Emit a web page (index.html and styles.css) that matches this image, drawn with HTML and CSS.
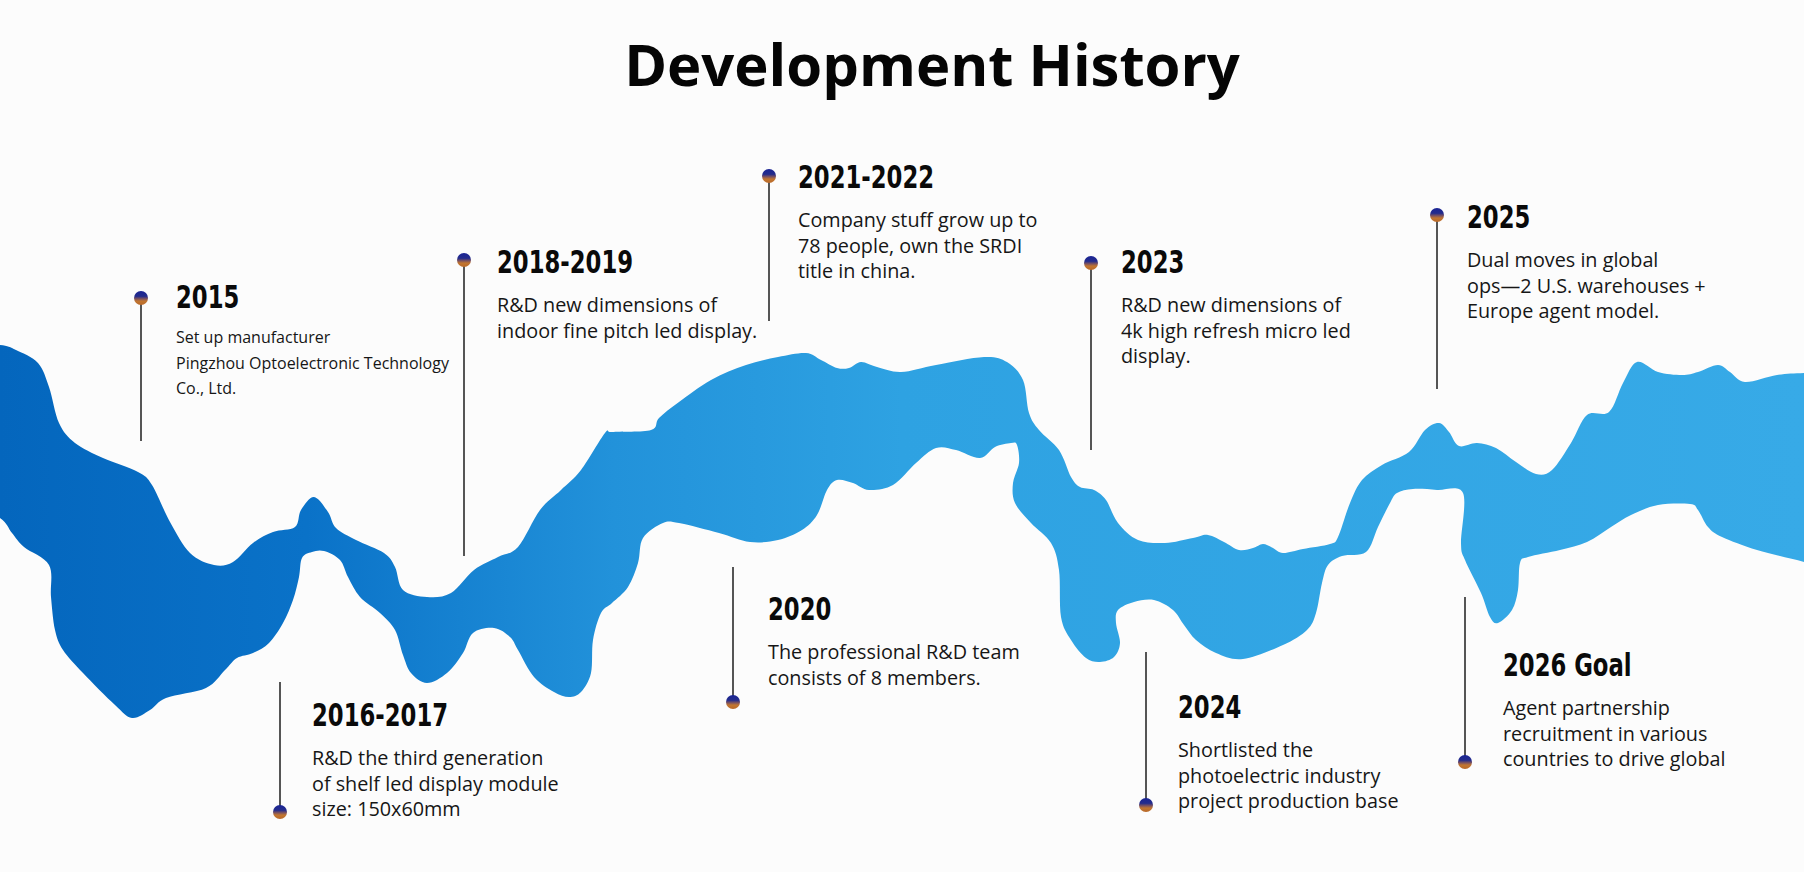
FILE: index.html
```html
<!DOCTYPE html>
<html lang="en">
<head>
<meta charset="utf-8">
<title>Development History</title>
<link rel="stylesheet" href="styles.css">
<script src="script.js" defer></script>
</head>
<body>
<main class="page">
  <h1 class="title">Development History</h1>
  <section class="timeline">
    <svg class="wave" viewBox="0 100 1804 772" width="1804" height="772" aria-hidden="true">
      <defs>
        <linearGradient id="waveGrad" gradientUnits="userSpaceOnUse" x1="0" y1="0" x2="1804" y2="0">
          <stop offset="0" stop-color="#0466bd"/>
          <stop offset="0.17" stop-color="#0a72c8"/>
          <stop offset="0.34" stop-color="#2292da"/>
          <stop offset="0.5" stop-color="#2ea2e2"/>
          <stop offset="1" stop-color="#37aae7"/>
        </linearGradient>
      </defs>
      <path class="ribbon" fill="url(#waveGrad)" d="M-70,345 L-35,345 L0,345 L16,350 L38,363 L49,387 L59,423 L75,443 L103,458 L138,472 L152,485 L170,522 L190,553 L214,565 L233,562 L253,543 L273,532 L295,527 L301,510 L314,497 L328,512 L336,528 L356,540 L384,553 L395,567 L403,590 L427,597 L451,593 L474,570 L498,557 L518,547 L540,510 L561,490 L581,470 L605,433 L612,432 L651,430 L659,418 L679,402 L711,380 L746,365 L778,357 L806,353 L821,360 L837,368 L849,368 L861,362 L877,367 L901,372 L936,365 L984,357 L1007,362 L1023,380 L1029,413 L1039,430 L1059,450 L1071,477 L1080,487 L1094,490 L1106,500 L1118,523 L1138,540 L1165,543 L1193,538 L1208,535 L1224,542 L1239,550 L1253,548 L1263,544 L1273,548 L1283,553 L1303,549 L1330,544 L1338,537 L1350,503 L1362,480 L1382,465 L1409,452 L1425,430 L1439,423 L1449,432 L1459,446 L1477,443 L1496,448 L1516,462 L1536,474 L1552,470 L1571,443 L1587,415 L1609,412 L1623,383 L1637,362 L1658,372 L1682,375 L1698,372 L1718,365 L1730,372 L1745,382 L1777,375 L1804,373 L1840,372 L1875,372 L1875,575 L1840,572 L1804,562 L1757,550 L1722,537 L1708,527 L1698,510 L1690,504 L1658,505 L1631,515 L1611,527 L1587,542 L1560,550 L1528,557 L1520,563 L1518,590 L1512,610 L1498,623 L1490,617 L1481,593 L1465,560 L1461,543 L1463,493 L1437,490 L1413,489 L1397,493 L1390,503 L1378,527 L1366,552 L1342,556 L1328,565 L1322,583 L1316,613 L1307,630 L1283,645 L1243,659 L1216,653 L1196,640 L1184,625 L1173,610 L1154,600 L1134,602 L1118,610 L1116,623 L1120,643 L1114,657 L1100,662 L1086,658 L1071,640 L1061,617 L1059,570 L1051,543 L1031,523 L1015,503 L1013,483 L1019,463 L1017,445 L1011,443 L995,447 L980,458 L956,450 L936,448 L916,463 L893,485 L869,490 L853,483 L837,480 L827,490 L817,515 L802,530 L778,540 L750,542 L719,533 L679,523 L663,523 L643,538 L638,563 L628,587 L612,603 L601,613 L593,640 L591,673 L581,692 L569,697 L554,692 L534,677 L518,650 L510,637 L494,628 L473,633 L463,653 L447,673 L427,683 L411,673 L403,655 L395,630 L380,613 L360,597 L348,577 L340,560 L324,551 L312,552 L302,558 L299,577 L293,600 L283,623 L269,643 L253,653 L237,658 L225,670 L206,688 L166,698 L150,710 L132,718 L115,705 L83,673 L63,650 L55,630 L51,597 L49,565 L24,547 L12,533 L0,518 L-35,500 L-70,500 Z"/>
    </svg>

    <div class="pin pin-top p2015"></div>
    <div class="pin pin-bottom p2016"></div>
    <div class="pin pin-top p2018"></div>
    <div class="pin pin-bottom p2020"></div>
    <div class="pin pin-top p2021"></div>
    <div class="pin pin-top p2023"></div>
    <div class="pin pin-bottom p2024"></div>
    <div class="pin pin-top p2025"></div>
    <div class="pin pin-bottom p2026"></div>

    <div class="event e2015 event-small">
      <h2 class="year">2015</h2>
      <p class="desc">Set up manufacturer<br>Pingzhou Optoelectronic Technology<br>Co., Ltd.</p>
    </div>
    <div class="event e2016">
      <h2 class="year">2016-2017</h2>
      <p class="desc">R&amp;D the third generation<br>of shelf led display module<br>size: 150x60mm</p>
    </div>
    <div class="event e2018">
      <h2 class="year">2018-2019</h2>
      <p class="desc">R&amp;D new dimensions of<br>indoor fine pitch led display.</p>
    </div>
    <div class="event e2020">
      <h2 class="year">2020</h2>
      <p class="desc">The professional R&amp;D team<br>consists of 8 members.</p>
    </div>
    <div class="event e2021">
      <h2 class="year">2021-2022</h2>
      <p class="desc">Company stuff grow up to<br>78 people, own the SRDI<br>title in china.</p>
    </div>
    <div class="event e2023">
      <h2 class="year">2023</h2>
      <p class="desc">R&amp;D new dimensions of<br>4k high refresh micro led<br>display.</p>
    </div>
    <div class="event e2024">
      <h2 class="year">2024</h2>
      <p class="desc">Shortlisted the<br>photoelectric industry<br>project production base</p>
    </div>
    <div class="event e2025">
      <h2 class="year">2025</h2>
      <p class="desc">Dual moves in global<br>ops—2 U.S. warehouses +<br>Europe agent model.</p>
    </div>
    <div class="event e2026">
      <h2 class="year">2026 Goal</h2>
      <p class="desc">Agent partnership<br>recruitment in various<br>countries to drive global</p>
    </div>
  </section>
</main>
</body>
</html>
```
FILE: styles.css
```css
* { box-sizing: border-box; }

html, body {
  margin: 0;
  padding: 0;
  background: #fcfcfc;
}

.page {
  width: 1804px;
  height: 872px;
  overflow: hidden;
  font-family: "Open Sans", "Noto Sans", sans-serif;
  color: #141414;
}

.title {
  margin: 28px 0 0;
  padding-left: 60px;
  text-align: center;
  font-family: "Open Sans", "Noto Sans", sans-serif;
  font-weight: 700;
  font-size: 58px;
  line-height: 72px;
  color: #050505;
}

.timeline {
  position: relative;
  width: 1804px;
  height: 772px;
}

.wave {
  display: block;
  overflow: hidden;
}

/* pins: stem + dot */
.pin {
  position: absolute;
  width: 1.5px;
  background: #555;
}

.pin::after {
  content: "";
  position: absolute;
  left: -6.25px;
  width: 14px;
  height: 14px;
  border-radius: 50%;
  background: linear-gradient(180deg, #1a2494 0%, #242c8c 38%, #7a5160 55%, #c27630 72%, #b8692a 100%);
}

.pin-top::after { top: -7px; }
.pin-bottom::after { bottom: -7px; }

.p2015 { left: 140px; top: 198px; height: 143px; }
.p2016 { left: 279px; top: 582px; height: 130px; }
.p2018 { left: 463px; top: 160px; height: 296px; }
.p2020 { left: 732px; top: 467px; height: 135px; }
.p2021 { left: 768px; top: 76px;  height: 145px; }
.p2023 { left: 1090px; top: 163px; height: 187px; }
.p2024 { left: 1145px; top: 552px; height: 153px; }
.p2025 { left: 1436px; top: 115px; height: 174px; }
.p2026 { left: 1464px; top: 497px; height: 165px; }

/* event labels */
.event {
  position: absolute;
  display: flex;
  flex-direction: column;
  align-items: flex-start;
  gap: 12px;
  white-space: nowrap;
}

.year {
  margin: 0;
  font-family: "DejaVu Sans Condensed", "DejaVu Sans", sans-serif;
  font-weight: 700;
  font-size: 32px;
  line-height: 36px;
  letter-spacing: 0;
  color: #0a0a0a;
  transform: scaleX(0.79);
  transform-origin: left center;
}

.desc {
  margin: 0;
  font-size: 19.8px;
  line-height: 25.5px;
  color: #161616;
}

.event-small { gap: 10px; }
.event-small .desc { font-size: 16px; }

.e2015 { left: 176px; top: 179px; }
.e2016 { left: 312px; top: 597px; }
.e2018 { left: 497px; top: 144px; }
.e2020 { left: 768px; top: 491px; }
.e2021 { left: 798px; top: 59px; }
.e2023 { left: 1121px; top: 144px; }
.e2024 { left: 1178px; top: 589px; }
.e2025 { left: 1467px; top: 99px; }
.e2026 { left: 1503px; top: 547px; }
```
FILE: script.js
```js
(function () {
  var path = document.querySelector('.wave .ribbon');
  if (!path) return;
  var nums = (path.getAttribute('d').match(/-?\d+(\.\d+)?/g) || []).map(Number);
  var pts = [];
  for (var i = 0; i + 1 < nums.length; i += 2) pts.push([nums[i], nums[i + 1]]);
  var n = pts.length;
  if (n < 4) return;
  function f(v) { return Math.round(v * 10) / 10; }
  var out = 'M' + pts[0][0] + ',' + pts[0][1];
  for (var k = 0; k < n; k++) {
    var p0 = pts[(k - 1 + n) % n], p1 = pts[k], p2 = pts[(k + 1) % n], p3 = pts[(k + 2) % n];
    var c1x = p1[0] + (p2[0] - p0[0]) / 6, c1y = p1[1] + (p2[1] - p0[1]) / 6;
    var c2x = p2[0] - (p3[0] - p1[0]) / 6, c2y = p2[1] - (p3[1] - p1[1]) / 6;
    out += ' C' + f(c1x) + ',' + f(c1y) + ' ' + f(c2x) + ',' + f(c2y) + ' ' + p2[0] + ',' + p2[1];
  }
  path.setAttribute('d', out + ' Z');
})();
```
